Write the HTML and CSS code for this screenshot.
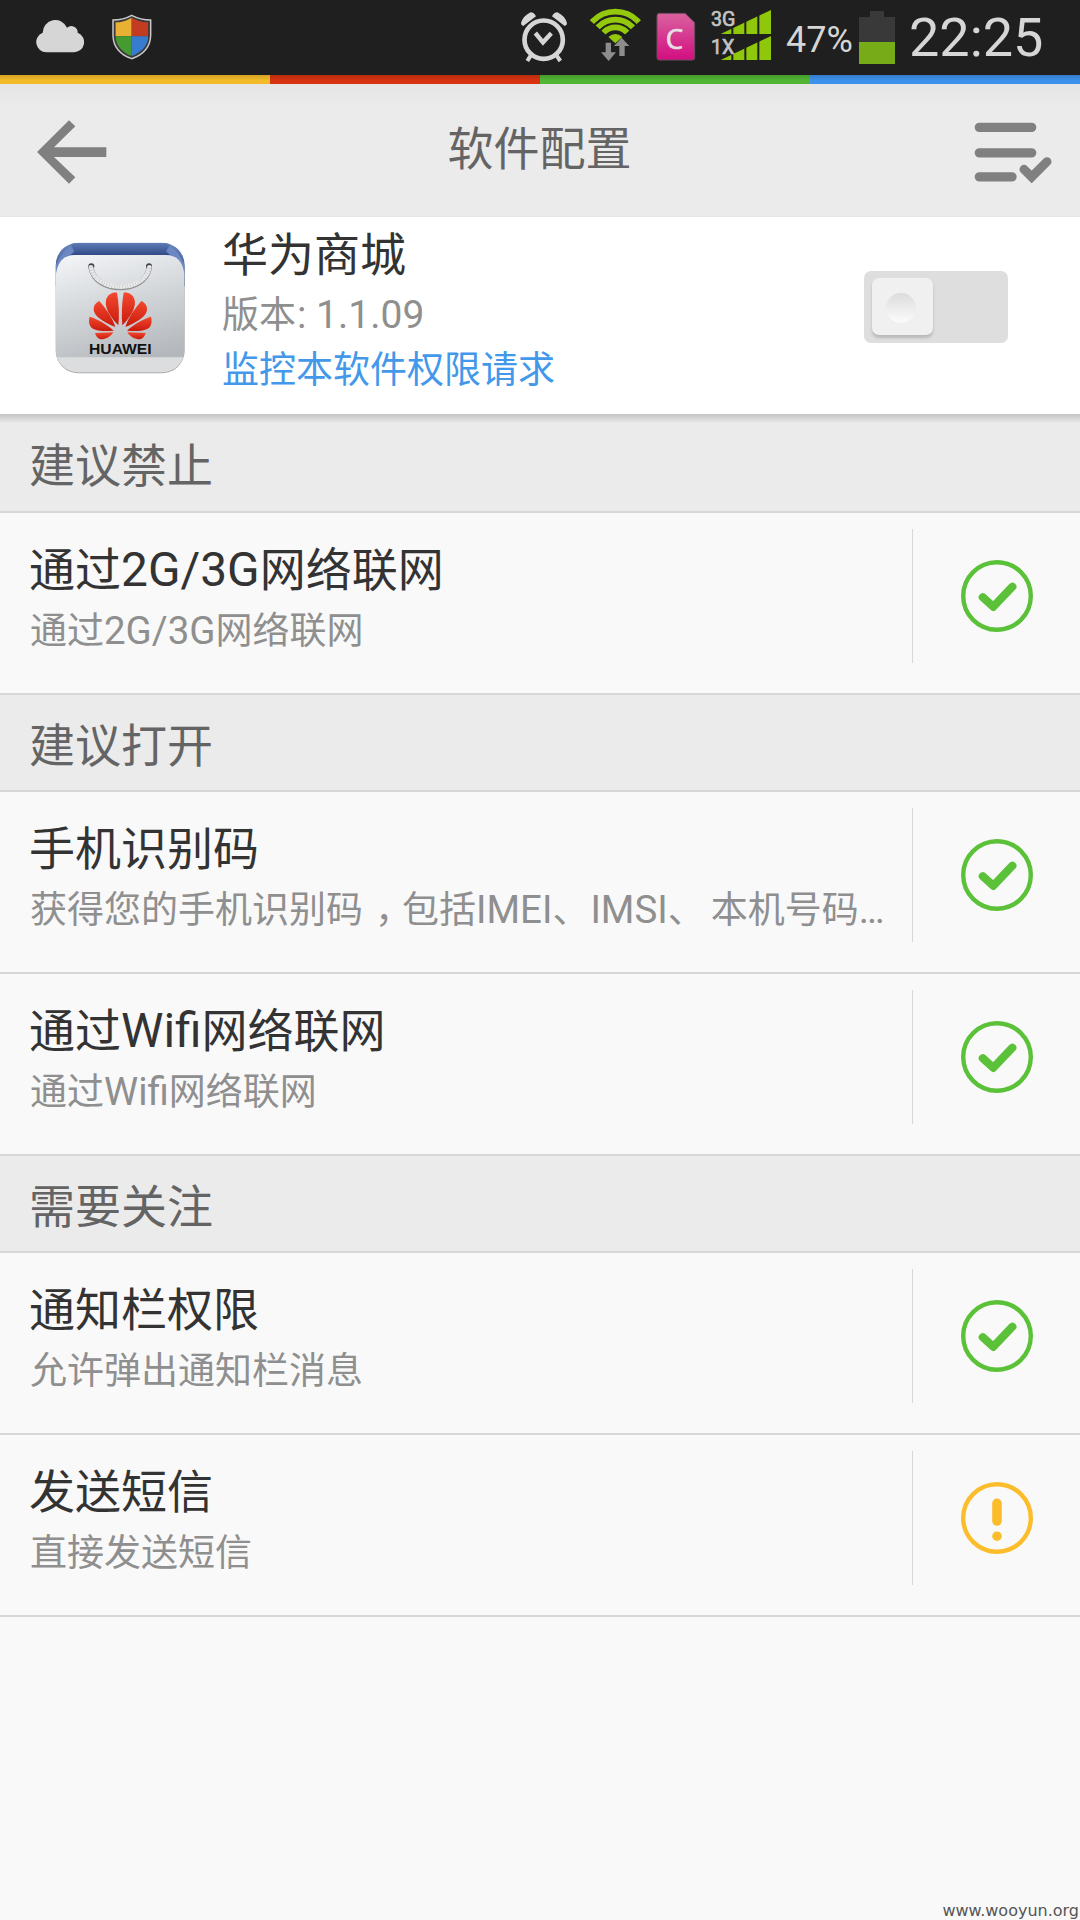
FILE: index.html
```html
<!DOCTYPE html>
<html lang="zh-CN">
<head>
<meta charset="utf-8">
<title>软件配置</title>
<link rel="stylesheet" href="styles.css">
</head>
<body>
<svg class="defs" width="0" height="0" aria-hidden="true">
  <symbol id="ok" viewBox="0 0 72 72">
    <circle cx="36" cy="36" r="33.8" fill="none" stroke="#5bc138" stroke-width="4.4"/>
    <path d="M21.8 37.3 32.3 46.8 51.3 26.8" fill="none" stroke="#5bc138" stroke-width="8.2" stroke-linecap="round" stroke-linejoin="round"/>
  </symbol>
  <symbol id="warn" viewBox="0 0 72 72">
    <circle cx="36" cy="36" r="33.8" fill="none" stroke="#fbbd2b" stroke-width="4.4"/>
    <path d="M36 21.3V39" fill="none" stroke="#fbbd2b" stroke-width="9.6" stroke-linecap="round"/>
    <circle cx="36" cy="54.2" r="4.8" fill="#fbbd2b"/>
  </symbol>
</svg>

<div class="statusbar">
  <svg class="cloud" width="48" height="33" viewBox="108 62 144 98">
    <path d="M139 158a30 30 0 0 1-11-58a38 38 0 0 1 73-15a19 19 0 0 1 32 15a30 30 0 0 1-12 58z" fill="#d6d6d6"/>
  </svg>
  <svg class="shield" width="40" height="46" viewBox="338 43 120 138">
    <defs>
      <clipPath id="shieldClip"><path d="M397 54 Q422 68 447 68 V108 Q446 150 397 169 Q350 150 348 108 V68 Q374 68 397 54Z"/></clipPath>
    </defs>
    <path d="M397 47 Q424 61 454 61 V108 Q452 158 397 177 Q343 158 341 108 V61 Q372 61 397 47Z" fill="#3a3a3a" stroke="#c9c9c9" stroke-width="4.5"/>
    <g clip-path="url(#shieldClip)">
      <path fill="#e9b034" d="M340 40h57v70h-57z"/>
      <path fill="#c33b20" d="M397 40h60v70h-60z"/>
      <path fill="#459b2f" d="M340 110h57v70h-57z"/>
      <path fill="#377ccf" d="M397 110h60v70h-60z"/>
    </g>
  </svg>

  <svg class="alarm" width="48" height="52" viewBox="62 34 144 156" fill="none" stroke="#d6d6d6">
    <circle cx="133" cy="120" r="57.500" stroke-width="14"/>
    <path d="M108 100 131 128 156 101" stroke-width="13"/>
    <path d="M94 168 84 184M172 168 183 184" stroke-width="12"/>
    <path d="M65 70Q72 48 94 38Q104 38 110 50L72 79Q65 78 65 70ZM203 70Q196 48 174 38Q164 38 158 50L196 79Q203 78 203 70Z" fill="#d6d6d6" stroke="none"/>
  </svg>
  <svg class="wifi" width="53" height="54" viewBox="270 22 159 162">
    <defs><clipPath id="fan"><path d="M349 128 265 52V15H433V52Z"/></clipPath></defs>
    <g clip-path="url(#fan)" fill="none" stroke="#93c80c" stroke-width="17">
      <circle cx="349" cy="128" r="95"/>
      <circle cx="349" cy="128" r="71"/>
      <circle cx="349" cy="128" r="48"/>
      <circle cx="349" cy="128" r="14" stroke-width="28"/>
    </g>
    <path d="M320 126h16v29h15l-22 26-23-26h14zM361 166v-30h-16l23-25 23 25h-14v30z" fill="#8d8d8d"/>
  </svg>
  <svg class="sim" width="40" height="50" viewBox="470 37 120 150">
    <defs><linearGradient id="pink" x1="0" y1="0" x2="0" y2="1"><stop offset="0" stop-color="#d9629f"/><stop offset="1" stop-color="#d30e80"/></linearGradient></defs>
    <path d="M480 41H557L586 69V174Q586 181 579 181H480Q473 181 473 174V48Q473 41 480 41Z" fill="url(#pink)" stroke="#6f4a5f" stroke-width="3"/>
    <text class="sim-letter" x="499" y="148">C</text>
  </svg>
  <svg class="signal" width="61" height="54" viewBox="635 24 183 162">
    <g fill="#8fc70a">
      <path d="M664 102 815 30V102ZM664 180 815 108V180Z"/>
      <path d="M696 30h6v152h-6zM735 30h6v152h-6zM774 30h6v152h-6z" fill="#1f1f1f"/>
    </g>
    <text class="net" x="635" y="78">3G</text>
    <text class="net" x="635" y="162">1X</text>
  </svg>
  <span class="percent">47%</span>
  <svg class="battery" width="36" height="53" viewBox="0 0 36 53">
    <path d="M11 0h14v6h11v25H0V6h11z" fill="#393939"/>
    <path d="M0 31h36v22H0z" fill="#78ab18"/>
  </svg>
  <span class="clock">22:25</span>
</div>

<div class="strip"><i class="yellow"></i><i class="red"></i><i class="green"></i><i class="blue"></i></div>

<header class="titlebar">
  <svg width="72" height="66" viewBox="110 356 216 198">
    <path d="M113 455 209 360 228 378 164 441H321V470H164L228 531 209 550Z" fill="#808080"/>
  </svg>
  <h1>软件配置</h1>
  <svg width="80" height="62" viewBox="580 362 240 186" fill="none" stroke="#808080" stroke-width="28" stroke-linecap="round">
    <path d="M599 381H756M599 457.500H756M599 529.500H697"/>
    <path d="M733 507 756 530 802 484" stroke-width="27" stroke-linecap="round"/>
  </svg>
</header>

<section class="app">
  <svg class="app-icon" width="131" height="132" viewBox="75 95 393 396">
    <defs>
      <linearGradient id="bag" x1="0" y1="0" x2="0.300" y2="1"><stop offset="0" stop-color="#f4f6f8"/><stop offset="0.500" stop-color="#d3d6d9"/><stop offset="1" stop-color="#b4b8bc"/></linearGradient>
      <linearGradient id="navy" x1="0" y1="0" x2="0" y2="1"><stop offset="0" stop-color="#6a86bd"/><stop offset="1" stop-color="#2d4785"/></linearGradient>
      <linearGradient id="fold" x1="0" y1="0" x2="0" y2="1"><stop offset="0" stop-color="#5f7db9"/><stop offset="1" stop-color="#314a86"/></linearGradient>
      <linearGradient id="petal" x1="0" y1="0" x2="0" y2="1"><stop offset="0" stop-color="#f4482f"/><stop offset="1" stop-color="#c81a0c"/></linearGradient>
      <clipPath id="iconClip"><rect x="77" y="97" width="387" height="389" rx="68"/></clipPath>
      <g id="petals" fill="url(#petal)">
        <path d="M265 345C236 316 222 287 229 266C236 250 249 246 261 247C267 280 268 315 265 345Z"/>
        <path d="M256 350C216 333 189 317 191 293C193 281 201 275 208 272C228 295 247 322 256 350Z"/>
        <path d="M251 361C210 364 184 360 179 343C176 333 177 325 179 319C204 327 233 343 251 361Z"/>
        <path d="M250 366C241 380 228 387 212 387C203 385 197 376 195 368Z"/>
      </g>
    </defs>
    <rect x="77" y="100" width="387" height="389" rx="68" fill="#aaa"/>
    <g clip-path="url(#iconClip)">
      <path fill="url(#navy)" d="M77 97h387v130H77z"/>
      <path d="M77 165Q95 125 120 107L133 122 120 134H421L408 122 422 107Q450 130 464 165V190H77Z" fill="#6b88c2"/>
      <path d="M120 97H422L408 124 421 134H121L133 124Z" fill="url(#fold)"/>
      <path d="M78 487V190Q86 134 136 134H406Q456 134 463 190V487Z" fill="url(#bag)"/>
      <path d="M77 441H464V490H77Z" fill="#dcddde"/>
    </g>
    <circle cx="184" cy="168" r="9" fill="#3f4246"/><circle cx="357" cy="168" r="9" fill="#3f4246"/>
    <path d="M183 172C197 252 344 252 358 172" fill="none" stroke="#8f9295" stroke-width="16" stroke-linecap="round"/>
    <path d="M183 171C197 249 344 249 358 171" fill="none" stroke="#ececed" stroke-width="13" stroke-linecap="round"/>
    <path d="M183 171C197 249 344 249 358 171" fill="none" stroke="#c0c2c4" stroke-width="12" stroke-dasharray="2 6"/>
    <use href="#petals"/>
    <use href="#petals" transform="translate(542 0) scale(-1 1)"/>
    <text class="brand" x="177" y="432" textLength="188" lengthAdjust="spacingAndGlyphs">HUAWEI</text>
  </svg>
  <div class="app-text">
    <h2>华为商城</h2>
    <p class="version">版本<span class="lat">: 1.1.09</span></p>
    <p class="link">监控本软件权限请求</p>
  </div>
  <div class="toggle"><div class="thumb"><div class="dimple"></div></div></div>
</section>

<main>
  <h3 class="group first">建议禁止</h3>
  <div class="row">
    <div class="text"><p class="name">通过<span class="lat">2G/3G</span>网络联网</p><p class="desc">通过<span class="lat">2G/3G</span>网络联网</p></div>
    <div class="state"><svg width="72" height="72"><use href="#ok"/></svg></div>
  </div>
  <h3 class="group">建议打开</h3>
  <div class="row">
    <div class="text"><p class="name">手机识别码</p><p class="desc">获得您的手机识别码<span class="comma">，</span>包括<span class="lat">IMEI</span><span class="pause">、</span><span class="lat">IMSI</span><span class="pause wide">、</span>本机号码<span class="lat">…</span></p></div>
    <div class="state"><svg width="72" height="72"><use href="#ok"/></svg></div>
  </div>
  <div class="row">
    <div class="text"><p class="name">通过<span class="lat">Wifi</span>网络联网</p><p class="desc">通过<span class="lat">Wifi</span>网络联网</p></div>
    <div class="state"><svg width="72" height="72"><use href="#ok"/></svg></div>
  </div>
  <h3 class="group">需要关注</h3>
  <div class="row">
    <div class="text"><p class="name">通知栏权限</p><p class="desc">允许弹出通知栏消息</p></div>
    <div class="state"><svg width="72" height="72"><use href="#ok"/></svg></div>
  </div>
  <div class="row">
    <div class="text"><p class="name">发送短信</p><p class="desc">直接发送短信</p></div>
    <div class="state"><svg width="72" height="72"><use href="#warn"/></svg></div>
  </div>
</main>
<footer class="watermark">www.wooyun.org</footer>
</body>
</html>
```
FILE: styles.css
```css
* { box-sizing: border-box; margin: 0; padding: 0; }

body {
  width: 1080px;
  height: 1920px;
  overflow: hidden;
  display: flex;
  flex-direction: column;
  background: #f9f9f9;
  font-family: "Noto Sans CJK SC", sans-serif;
  font-weight: 400;
}

svg { display: block; flex: none; }
.defs { position: absolute; }
h1, h2, h3 { font-weight: 400; }

.lat {
  font-family: Roboto, sans-serif;
  font-size: 1.04em;
  line-height: 1;
}

/* status bar */
.statusbar {
  height: 75px;
  flex: none;
  display: flex;
  align-items: flex-start;
  background: #1f1f1f;
  color: #d6d6d6;
  font-family: Roboto, sans-serif;
}
.cloud { margin: 20px 0 0 36px; }
.shield { margin: 14px 0 0 28px; }
.alarm { margin: 11px 0 0 368px; }
.wifi { margin: 8px 0 0 21px; }
.sim { margin: 12px 0 0 14px; }
.signal { margin: 8px 0 0 15px; }
.sim-letter { font: 83px "Open Sans", sans-serif; fill: #e6e0e3; stroke: #e6e0e3; stroke-width: 2px; }
.net { font: 59px Roboto, sans-serif; fill: #c4c4c4; stroke: #c4c4c4; stroke-width: 2px; }
.percent { width: 73px; margin-left: 14px; font-size: 36px; line-height: 80px; }
.battery { margin-top: 11px; }
.clock { margin-left: 14px; font-size: 54px; line-height: 75px; }

.strip { display: flex; height: 9px; flex: none; }
.strip i { flex: 1; }
.yellow { background: linear-gradient(#d3a125, #f3bb29 60%); }
.red { background: linear-gradient(#b82c10, #d83311 60%); }
.green { background: linear-gradient(#459b2d, #53b534 60%); }
.blue { background: linear-gradient(#347bc8, #3d91ec 60%); }

/* title bar */
.titlebar {
  height: 133px;
  flex: none;
  display: flex;
  align-items: flex-start;
  justify-content: space-between;
  padding: 35px 27px 0 36px;
  background: linear-gradient(#e5e5e5, #ebebeb 22px);
  border-bottom: 1px solid #e6e6e6;
}
.titlebar h1 {
  margin-right: 2px;
  color: #646464;
  font-size: 46px;
  line-height: 53px;
}
.titlebar svg:last-child { margin-top: 2px; }

/* app summary */
.app {
  height: 197px;
  flex: none;
  display: flex;
  align-items: flex-start;
  background: #fff;
}
.app-icon { margin: 25px 0 0 55px; }
.brand { font: bold 42px "Liberation Sans", sans-serif; fill: #111; }
.app-text { flex: 1; margin: 4px 0 0 36px; }
.app-text h2 { color: #333; font-size: 46px; line-height: 60px; }
.app-text p { font-size: 37px; color: #8f8f8f; line-height: 54px; }
.app-text .version { line-height: 62px; }
.version .lat { margin-left: 1px; font-size: 39px; }
.app-text .link { color: #4398ea; line-height: 48px; }

.toggle {
  width: 144px;
  height: 72px;
  margin: 54px 72px 0 0;
  padding: 7px 8px;
  border-radius: 7px;
  background: #dedede;
}
.thumb {
  width: 61px;
  height: 57px;
  display: grid;
  place-items: center;
  border-radius: 7px;
  background: #f0f0f0;
  box-shadow: 0 3px 3px #b9b9b9;
}
.dimple {
  width: 30px;
  height: 30px;
  margin: 3px 3px 0 0;
  border-radius: 50%;
  background: linear-gradient(#dcdcdc, #fcfcfc);
}

/* permission list */
.group {
  height: 97px;
  padding-left: 29px;
  border-bottom: 2px solid #d7d7d7;
  background: #ebebeb;
  color: #646464;
  font-size: 46px;
  line-height: 94px;
}
.group.first {
  height: 99px;
  line-height: 96px;
  background: linear-gradient(#c4c4c4, #d0d0d0 3px, #ebebeb 9px);
}
.row {
  height: 182px;
  display: flex;
  border-bottom: 2px solid #d7d7d7;
}
.text {
  flex: 1;
  padding: 22px 0 0 29px;
  white-space: nowrap;
}
.name { color: #333; font-size: 46px; line-height: 62px; }
.desc { padding-left: 1px; color: #8f8f8f; font-size: 37px; line-height: 62px; }
.comma { margin-left: 12px; letter-spacing: -10px; }
.pause { letter-spacing: 1px; }
.pause.wide { letter-spacing: 6px; }
.state {
  width: 168px;
  height: 134px;
  margin-top: 16px;
  padding: 31px 0 0 48px;
  border-left: 1px solid #d7d7d7;
}

.watermark {
  margin-top: auto;
  padding-right: 1px;
  text-align: right;
  color: #555;
  font: 16px/18px "DejaVu Sans", sans-serif;
}
```
